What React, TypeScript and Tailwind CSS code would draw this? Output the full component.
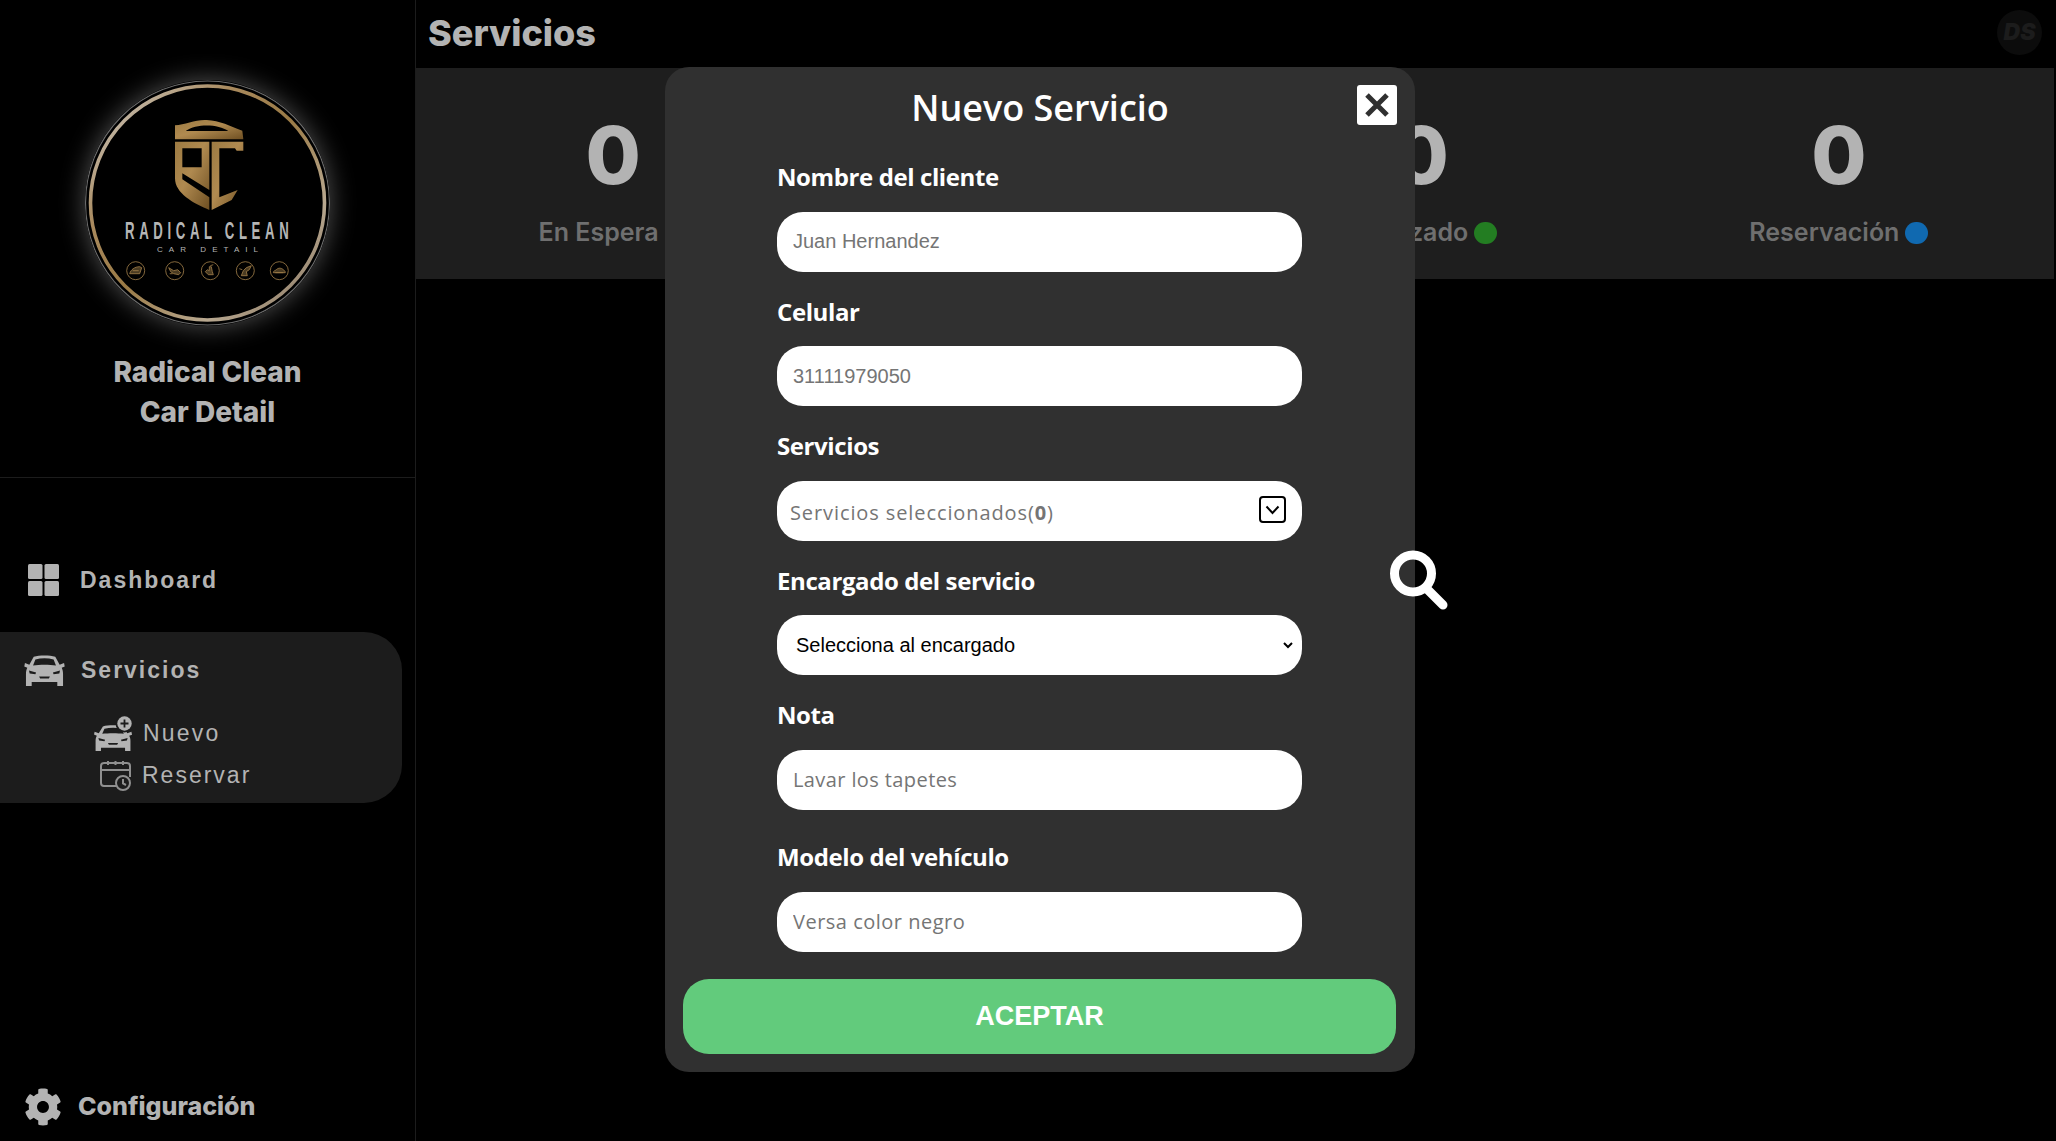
import React from 'react';
import { FaCog } from 'react-icons/fa';

const CAR_PATH =
  'M28 5C45 0 75 0 92 5L105 29L118 24L120 34L111 38C114 44 115 50 115 56V92H98V80H22V92H5V56C5 50 6 44 9 38L0 34L2 24L15 29ZM33 13L26 31C46 28 74 28 94 31L87 13C70 9 50 9 33 13ZM14 46L16 55L33 57L35 52ZM106 46L85 52L87 57L104 55ZM44 64L47 70H73L76 64Z';

const CarIcon = () => (
  <svg width="41" height="31" viewBox="0 0 120 92">
    <path d={CAR_PATH} fill="#b3b3b3" fillRule="evenodd" />
  </svg>
);

const NewCarIcon = () => (
  <svg width="38" height="35" viewBox="0 0 38 35">
    <g transform="translate(0 9) scale(0.317 0.283)">
      <path d={CAR_PATH} fill="#b3b3b3" fillRule="evenodd" />
    </g>
    <circle cx="30.5" cy="7.5" r="9" fill="#1c1c1c" />
    <circle cx="30.5" cy="7.5" r="7.2" fill="#b3b3b3" />
    <path d="M30.5 3.5v8M26.5 7.5h8" stroke="#1c1c1c" strokeWidth="1.8" />
  </svg>
);

const CalendarIcon = () => (
  <svg width="31" height="30" viewBox="0 0 31 30" fill="none" stroke="#8f8f8f" strokeWidth="2">
    <path d="M17 25H4a3 3 0 0 1-3-3V5a3 3 0 0 1 3-3h23a3 3 0 0 1 3 3v11" />
    <path d="M1 9h29M8 0v4M15.5 0v4M23 0v4" />
    <circle cx="23" cy="22" r="7" fill="#1c1c1c" />
    <path d="M23 18v4.5l3 1.5" />
  </svg>
);

const DashboardIcon = () => (
  <svg width="31" height="32" viewBox="0 0 31 32" fill="#b3b3b3">
    <rect x="0" y="0" width="14.5" height="15" rx="1.5" />
    <rect x="16.5" y="0" width="14.5" height="15" rx="1.5" />
    <rect x="0" y="17" width="14.5" height="15" rx="1.5" />
    <rect x="16.5" y="17" width="14.5" height="15" rx="1.5" />
  </svg>
);

const SearchIcon = () => (
  <svg width="58" height="60" viewBox="0 0 58 60" fill="none" stroke="#ffffff">
    <circle cx="23" cy="23.5" r="18.5" strokeWidth="9" />
    <path d="M37 39L53 55" strokeWidth="9" strokeLinecap="round" />
  </svg>
);

// iconitos del logo: [centro x, trazo relativo]
const logoBadges = [
  { cx: 50.7, d: 'M-6 3c1-4 5-7 10-7l2 1-2 6zM-3 0h6' },
  { cx: 89.7, d: 'M-6-3l5 3 4-1 3 3-2 2-5-1-3-2zM-5 3h3' },
  { cx: 125.3, d: 'M-5 1l3 3h5l-1-3-1-5h-2l0 4-2-1zM0-5l3-1' },
  { cx: 160.3, d: 'M-4 5l2-5 3-3 5-2-2 4-3 2 1 4zM-6-2l3 1' },
  { cx: 194.3, d: 'M-6 2c0-2 2-2 3-3 2-2 5-2 7 0 1 1 2 1 2 3zM-4 2h8' },
];

// logo del negocio, redibujado a mano
const Logo = () => (
  <svg width="245" height="246" viewBox="0 0 245 246" className="mx-auto rounded-full shadow-[0_0_26px_rgba(255,255,255,0.32)]">
    <defs>
      <linearGradient id="ring" x1="0" y1="0" x2="1" y2="1">
        <stop offset="0" stopColor="#d0d0d0" />
        <stop offset="0.3" stopColor="#a98a5e" />
        <stop offset="0.5" stopColor="#9a7a45" />
        <stop offset="0.75" stopColor="#b8a890" />
        <stop offset="1" stopColor="#7d6a55" />
      </linearGradient>
      <linearGradient id="gold" x1="0" y1="0" x2="1" y2="1">
        <stop offset="0" stopColor="#9c7a42" />
        <stop offset="0.45" stopColor="#b08a50" />
        <stop offset="1" stopColor="#6e4f22" />
      </linearGradient>
    </defs>
    <circle cx="122.5" cy="123" r="122" fill="#000000" stroke="#6a6a6a" strokeWidth="1.2" />
    <circle cx="122.5" cy="123" r="117" fill="none" stroke="url(#ring)" strokeWidth="3.6" />
    <g transform="translate(80 30) scale(0.3333)">
      <path
        d="M30 88V46C60 44 92 28 125 30C165 32 195 48 232 62L235 88ZM62 63H190C160 42 95 40 62 63Z"
        fill="url(#gold)"
        fillRule="evenodd"
      />
      <path
        d="M30 95H133V240L52 190V208L133 262V300C85 280 30 250 30 205ZM52 115V172H110V115Z"
        fill="url(#gold)"
        fillRule="evenodd"
      />
      <path d="M140 95H235V122H215L210 115H163V262L218 240L200 270L140 300Z" fill="url(#gold)" />
    </g>
    <text
      transform="translate(40 159) scale(0.55 1)"
      fontFamily="'Liberation Sans', sans-serif"
      fontSize="24"
      fontWeight="700"
      letterSpacing="8.4"
      fill="#b5b5b5"
    >
      RADICAL CLEAN
    </text>
    <text
      x="72"
      y="172"
      fontFamily="'Liberation Sans', sans-serif"
      fontSize="8"
      textLength="101"
      fill="#b5b5b5"
    >
      CAR DETAIL
    </text>
    {logoBadges.map((b) => (
      <g key={b.cx} fill="none" stroke="#a5824b" strokeWidth="0.8">
        <circle cx={b.cx} cy="190.7" r="9" />
        <path transform={`translate(${b.cx} 190.7)`} d={b.d} fill="#a5824b" fillOpacity="0.45" />
      </g>
    ))}
  </svg>
);

const fields = [
  { label: 'Nombre del cliente', placeholder: 'Juan Hernandez' },
  { label: 'Celular', placeholder: '31111979050' },
];

const Label = ({ text }: { text: string }) => (
  <label className="block h-[40px] mb-[14.6px] text-[24px] leading-[40px] font-bold tracking-[-0.4px] text-white">{text}</label>
);

const inputBase = 'block w-full h-[60px] rounded-[26px] bg-white outline-none';

const Modal = () => (
  <div className="absolute left-[665px] top-[67px] w-[750px] h-[1005px] rounded-[24px] bg-[#303030] font-['Open_Sans',sans-serif]">
    <div className="h-[82px] mb-[8px] flex items-center justify-center text-[36px] font-semibold text-white">Nuevo Servicio</div>
    <button className="absolute top-[18px] right-[18px] w-[40px] h-[40px] rounded-[3px] bg-white flex items-center justify-center">
      <svg width="26" height="26" viewBox="0 0 26 26" stroke="#303030" strokeWidth="5">
        <path d="M3 3l20 20M23 3L3 23" />
      </svg>
    </button>

    <div className="pl-[112px] pr-[113px]">
      {fields.map((f) => (
        <div key={f.label} className="mb-[20px]">
          <Label text={f.label} />
          <input
            className={`${inputBase} pl-[16px] text-[20px] font-['Liberation_Sans',sans-serif] placeholder:text-[#757575]`}
            placeholder={f.placeholder}
          />
        </div>
      ))}

      <div className="mb-[20px]">
        <Label text="Servicios" />
        <div className={`${inputBase} pl-[13px] pr-[16px] flex items-center justify-between`}>
          <span className="text-[20px] tracking-[0.9px] text-[#757575] pt-[4px]">
            Servicios seleccionados(<b>0</b>)
          </span>
          <span className="w-[27px] h-[27px] mb-[2px] rounded-[4px] border-2 border-black flex items-center justify-center">
            <svg width="15" height="10" viewBox="0 0 15 10" fill="none" stroke="#000000" strokeWidth="2">
              <path d="M1.5 1.5L7.5 8L13.5 1.5" />
            </svg>
          </span>
        </div>
      </div>

      <div className="mb-[20px]">
        <Label text="Encargado del servicio" />
        <select className={`${inputBase} pl-[15px] border-r-[6px] border-transparent text-[20px] text-black font-['Liberation_Sans',sans-serif]`}>
          <option>Selecciona al encargado</option>
        </select>
      </div>

      <div className="mb-[27px]">
        <Label text="Nota" />
        <input
          className={`${inputBase} pl-[16px] text-[20px] tracking-[0.4px] placeholder:text-[#757575]`}
          placeholder="Lavar los tapetes"
        />
      </div>

      <div>
        <Label text="Modelo del vehículo" />
        <input
          className={`${inputBase} pl-[16px] text-[20px] tracking-[0.5px] placeholder:text-[#757575]`}
          placeholder="Versa color negro"
        />
      </div>
    </div>

    <button className="block mt-[27px] ml-[18px] w-[713px] h-[75px] rounded-[26px] bg-[#62cb7c] text-[27px] font-bold text-white font-['Liberation_Sans',sans-serif]">
      ACEPTAR
    </button>
  </div>
);

const stats = [
  { label: 'En Espera', dot: 'bg-[#8a1414]', w: 'w-[143px]' },
  { label: 'En Proceso', dot: 'bg-[#b08a14]', w: 'w-[157px]' },
  { label: 'Finalizado', dot: 'bg-[#237d22]', w: 'w-[154px]' },
  { label: 'Reservación', dot: 'bg-[#1069b0]', w: 'w-[179px]' },
];

export default function App() {
  return (
    <div className="relative flex h-[1141px] w-[2056px] overflow-hidden bg-black font-['Inter',sans-serif]">
      {/* Sidebar */}
      <aside className="flex h-full w-[416px] flex-col border-r border-[#1c1c1c]">
        <div className="h-[478px] border-b border-[#1c1c1c] pt-[80px]">
          <Logo />
          <div className="mt-[26px] text-center text-[28px] font-extrabold leading-[40px] text-[#b3b3b3]">
            Radical Clean
            <br />
            Car Detail
          </div>
        </div>

        <div className="mt-[86px] flex h-[32px] items-center gap-[21px] pl-[28px] font-['Liberation_Sans',sans-serif] text-[23px] font-bold tracking-[2px] text-[#b3b3b3]">
          <DashboardIcon />
          Dashboard
        </div>

        <div className="mt-[36px] h-[171px] w-[402px] rounded-r-[38px] bg-[#1c1c1c] pt-[23px] font-['Liberation_Sans',sans-serif] text-[#b3b3b3]">
          <div className="flex h-[31px] items-center gap-[16px] pl-[24px] text-[23px] font-bold tracking-[2px]">
            <CarIcon />
            Servicios
          </div>
          <div className="mt-[26px] flex h-[43px] items-center gap-[11px] pl-[93px] text-[23px] tracking-[2.2px]">
            <span className="flex w-[39px] justify-center"><NewCarIcon /></span>
            Nuevo
          </div>
          <div className="-mt-[1px] flex h-[43px] items-center gap-[10px] pl-[93px] text-[23px] tracking-[2px]">
            <span className="flex w-[39px] justify-center pl-[5px]"><CalendarIcon /></span>
            Reservar
          </div>
        </div>

        <div className="mt-auto mb-[15px] flex h-[38px] items-center gap-[16px] pl-[24px] text-[25px] font-extrabold text-[#b3b3b3]">
          <FaCog size={38} />
          Configuración
        </div>
      </aside>

      {/* Main */}
      <main className="flex-1 pr-[2px]">
        <div className="flex h-[68px] items-center justify-between pb-[3px] pl-[12px] pr-[12px]">
          <h1 className="text-[36px] font-extrabold text-[#b3b3b3]">Servicios</h1>
          <div className="flex h-[45px] w-[45px] items-center justify-center rounded-full bg-[#0c0c0c] text-[23px] font-black italic text-[#1c1c1c]">
            DS
          </div>
        </div>
        <div className="flex h-[211px] items-center justify-around bg-[#1e1e1e]">
          {stats.map((s) => (
            <div key={s.label} className={`${s.w} flex flex-col items-center pt-[10px]`}>
              <div className="h-[100px] text-[80px] font-extrabold leading-[100px] text-[#b3b3b3]">0</div>
              <div className="mt-[9px] flex items-center gap-[6px] whitespace-nowrap text-[25px] font-semibold text-[#6f6f6f]">
                {s.label}
                <span className={`h-[22px] w-[23px] rounded-full ${s.dot}`} />
              </div>
            </div>
          ))}
        </div>
      </main>

      <Modal />

      <div className="absolute left-[1390px] top-[550px]">
        <SearchIcon />
      </div>
    </div>
  );
}
